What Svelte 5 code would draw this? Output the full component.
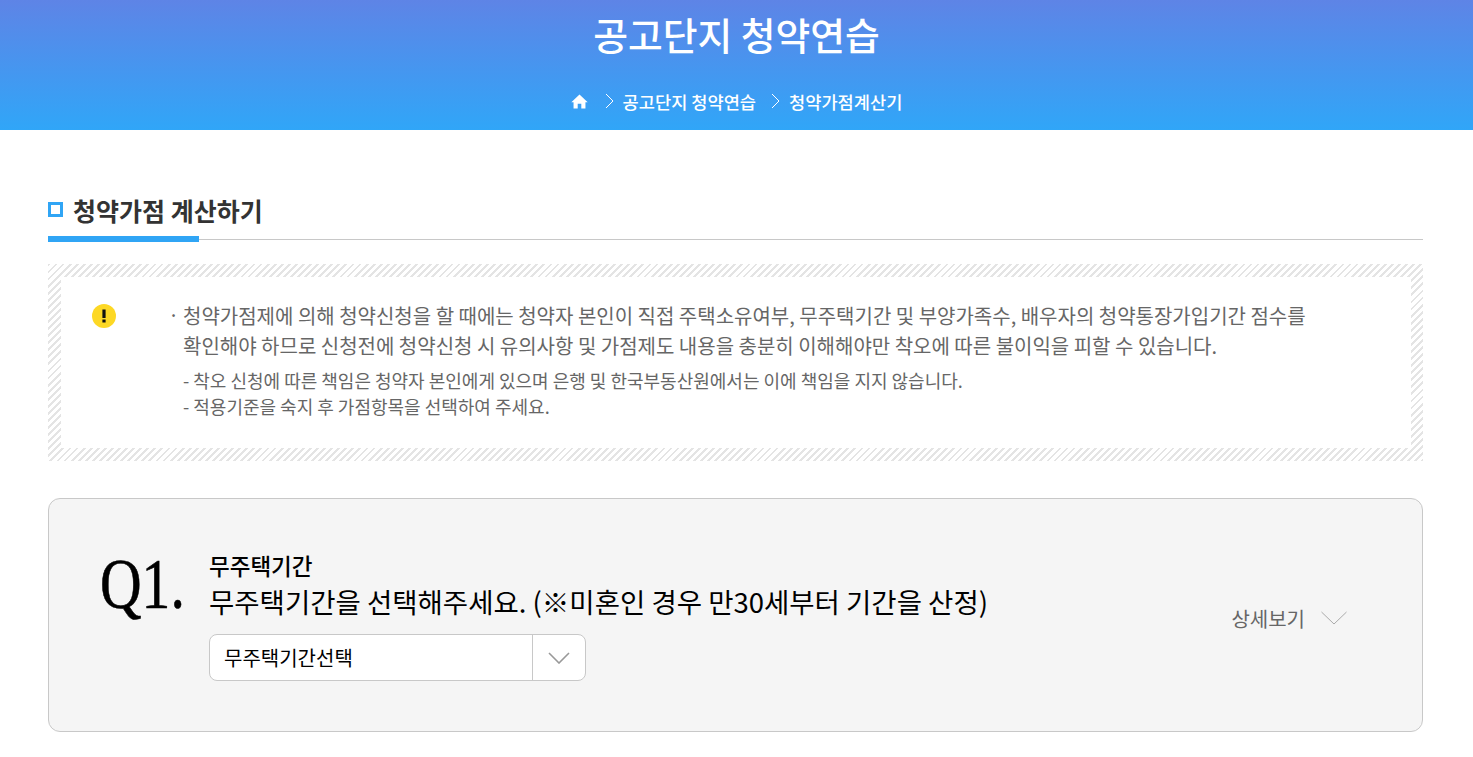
<script>
  const notes = [
    '- 착오 신청에 따른 책임은 청약자 본인에게 있으며 은행 및 한국부동산원에서는 이에 책임을 지지 않습니다.',
    '- 적용기준을 숙지 후 가점항목을 선택하여 주세요.'
  ];
</script>

<header class="top">
  <h1>공고단지 청약연습</h1>
  <nav class="crumbs">
    <svg class="home" viewBox="0 0 16 14" width="17" height="15">
      <path d="M8 0.5 L0.3 7.6 L2.4 7.6 L2.4 13.5 L6.3 13.5 L6.3 9 L9.7 9 L9.7 13.5 L13.6 13.5 L13.6 7.6 L15.7 7.6 Z" fill="#fff" />
    </svg>
    <svg class="sep first" viewBox="0 0 9 16" width="9" height="16">
      <path d="M1 1 L8 8 L1 15" fill="none" stroke="#fff" stroke-width="1" />
    </svg>
    <span>공고단지 청약연습</span>
    <svg class="sep" viewBox="0 0 9 16" width="9" height="16">
      <path d="M1 1 L8 8 L1 15" fill="none" stroke="#fff" stroke-width="1" />
    </svg>
    <span>청약가점계산기</span>
  </nav>
</header>

<main class="content">
  <div class="section-title">
    <i class="square"></i>
    <h2>청약가점 계산하기</h2>
  </div>

  <div class="notice">
    <div class="notice-inner">
      <svg class="warn" viewBox="0 0 24 24" width="24" height="24">
        <circle cx="12" cy="12" r="12" fill="#fdd825" />
        <rect x="10.4" y="5.5" width="3.2" height="8.5" fill="#111" />
        <rect x="10.4" y="15.5" width="3.2" height="3" fill="#111" />
      </svg>
      <div class="notice-text">
        <p class="lead">청약가점제에 의해 청약신청을 할 때에는 청약자 본인이 직접 주택소유여부, 무주택기간 및 부양가족수, 배우자의 청약통장가입기간 점수를<br />확인해야 하므로 신청전에 청약신청 시 유의사항 및 가점제도 내용을 충분히 이해해야만 착오에 따른 불이익을 피할 수 있습니다.</p>
        <ul>
          {#each notes as note}
            <li>{note}</li>
          {/each}
        </ul>
      </div>
    </div>
  </div>

  <section class="question">
    <div class="q-no"><span>Q1.</span></div>
    <div class="q-body">
      <h3>무주택기간</h3>
      <p>무주택기간을 선택해주세요. (※미혼인 경우 만30세부터 기간을 산정)</p>
      <div class="select">
        <span class="value">무주택기간선택</span>
        <span class="arrow">
          <svg viewBox="0 0 22 12" width="22" height="12">
            <path d="M1 1 L11 11 L21 1" fill="none" stroke="#999" stroke-width="1.6" />
          </svg>
        </span>
      </div>
    </div>
    <div class="more">
      <span>상세보기</span>
      <svg viewBox="0 0 26 14" width="26" height="14">
        <path d="M0.5 1 L13 13 L25.5 1" fill="none" stroke="#aaa" stroke-width="1" />
      </svg>
    </div>
  </section>
</main>

<style>
  :global(body) {
    margin: 0;
    background: #fff;
    font-family: "Noto Sans CJK KR", "Noto Sans", sans-serif;
    overflow: hidden;
  }

  .top {
    height: 130px;
    background: linear-gradient(180deg, #5e84e6, #30a6f8);
    color: #fff;
    text-align: center;
    box-sizing: border-box;
    padding-top: 8px;
  }

  .top h1 {
    margin: 0;
    font-size: 37.8px;
    font-weight: 500;
    line-height: 52px;
  }

  .crumbs {
    margin-top: 28px;
    display: flex;
    justify-content: center;
    align-items: center;
    height: 26px;
    font-size: 17.6px;
    font-weight: 500;
  }

  .home {
    margin-right: 17px;
  }

  .sep {
    margin: 0 9px 0 15px;
  }

  .sep.first {
    margin-left: 0;
  }

  .content {
    padding: 0 50px 0 48px;
  }

  .section-title {
    margin-top: 62px;
    height: 47px;
    display: flex;
    align-items: flex-start;
    gap: 10px;
    border-bottom: 1px solid #c8c8c8;
    position: relative;
  }

  .section-title::after {
    content: '';
    position: absolute;
    left: 0;
    bottom: -3px;
    width: 151px;
    height: 6px;
    background: #30a5f5;
  }

  .square {
    width: 15px;
    height: 15px;
    margin-top: 10px;
    box-sizing: border-box;
    border: 3px solid #30a5f5;
    background: #fff;
  }

  .section-title h2 {
    margin: 0;
    font-size: 25px;
    font-weight: 700;
    line-height: 36px;
    color: #333;
  }

  .notice {
    margin-top: 24px;
    padding: 13px 12px 13px 13px;
    height: 197px;
    box-sizing: border-box;
    background: repeating-linear-gradient(135deg, #e4e4e4 0 2px, #fff 2px 5px);
  }

  .notice-inner {
    height: 100%;
    background: #fff;
    display: flex;
    padding: 24px 0 0 31px;
    box-sizing: border-box;
  }

  .warn {
    margin-top: 3px;
    flex: none;
  }

  .notice-text {
    margin-left: 68px;
    color: #666;
  }

  .lead {
    margin: 0 0 0 -1px;
    font-size: 20px;
    line-height: 30px;
    position: relative;
    white-space: nowrap;
  }

  .lead::before {
    content: '·';
    position: absolute;
    left: -15px;
    top: -1px;
  }

  .notice-text ul {
    margin: 6px 0 0 -1px;
    padding: 0;
    list-style: none;
    font-size: 18px;
    line-height: 26px;
  }

  .question {
    margin-top: 37px;
    height: 234px;
    box-sizing: border-box;
    background: #f5f5f5;
    border: 1px solid #c8c8c8;
    border-radius: 12px;
    display: flex;
    padding: 50px 75px 0 51px;
    color: #000;
  }

  .q-no {
    width: 109px;
    flex: none;
    font-family: "Liberation Serif", serif;
    font-size: 72px;
    line-height: 70px;
    -webkit-text-stroke: 0.6px #000;
    color: #000;
  }

  .q-no span {
    display: inline-block;
    transform: scaleX(0.8);
    transform-origin: left center;
  }

  .q-body {
    flex: 1;
  }

  .q-body h3 {
    margin: 0;
    font-size: 22.5px;
    font-weight: 500;
    line-height: 32px;
  }

  .q-body p {
    margin: 0;
    font-size: 27.5px;
    line-height: 40px;
    white-space: nowrap;
  }

  .select {
    margin-top: 13px;
    width: 377px;
    height: 47px;
    box-sizing: border-box;
    background: #fff;
    border: 1px solid #c8c8c8;
    border-radius: 8px;
    display: flex;
    align-items: center;
  }

  .value {
    flex: 1;
    padding-left: 14px;
    font-size: 20px;
  }

  .arrow {
    width: 52px;
    height: 100%;
    border-left: 1px solid #c8c8c8;
    display: flex;
    align-items: center;
    justify-content: center;
  }

  .more {
    display: flex;
    align-items: center;
    gap: 16px;
    height: 30px;
    margin-top: 54px;
    font-size: 20px;
    color: #666;
  }
</style>
